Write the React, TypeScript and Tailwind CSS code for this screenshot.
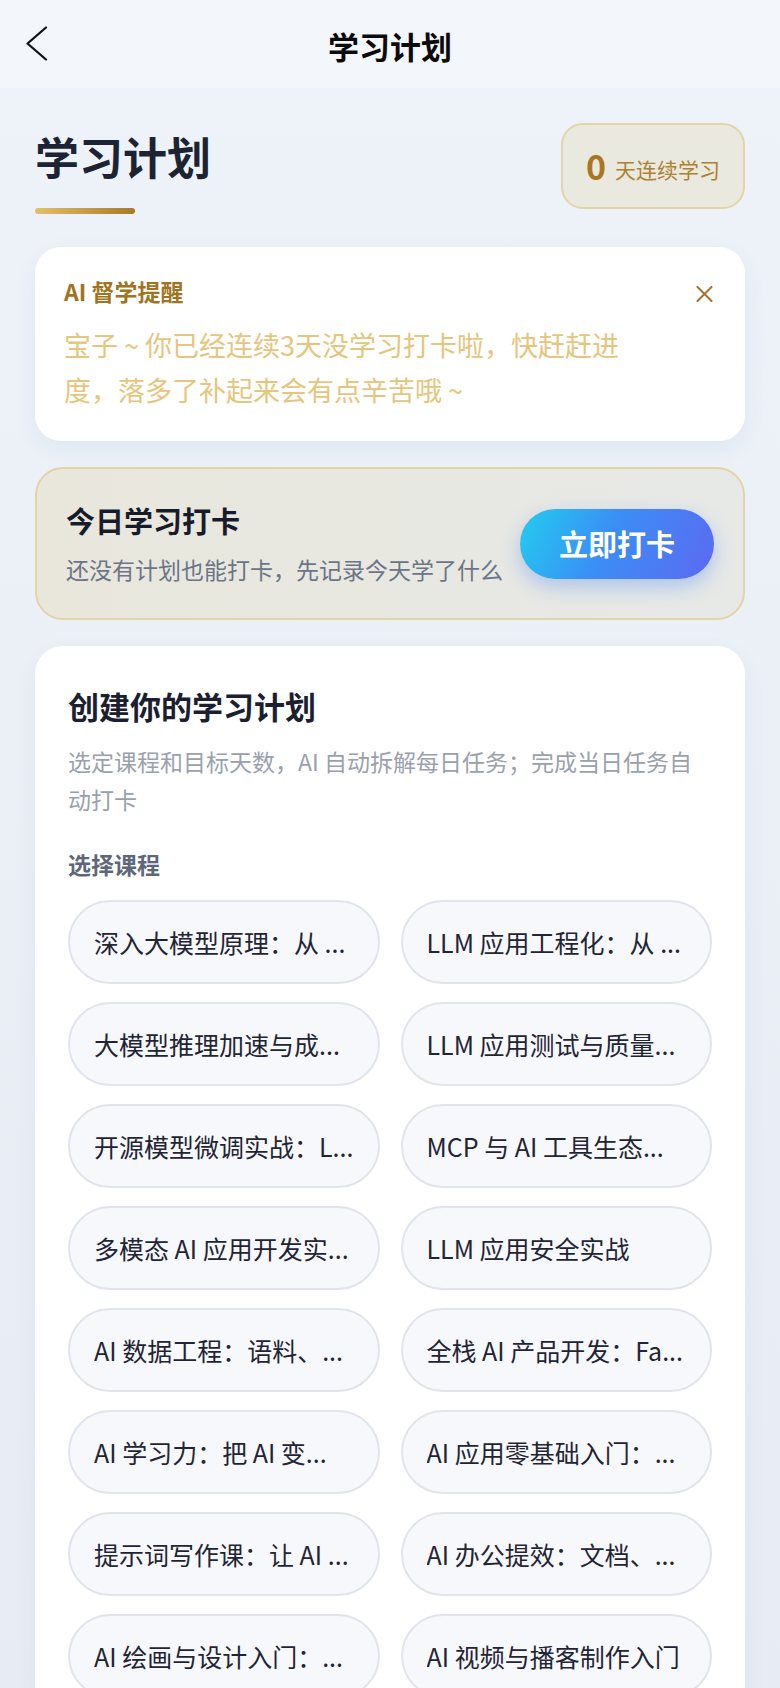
import React from "react";

const courses = [
  "深入大模型原理：从 ...",
  "LLM 应用工程化：从 ...",
  "大模型推理加速与成...",
  "LLM 应用测试与质量...",
  "开源模型微调实战：L...",
  "MCP 与 AI 工具生态...",
  "多模态 AI 应用开发实...",
  "LLM 应用安全实战",
  "AI 数据工程：语料、...",
  "全栈 AI 产品开发：Fa...",
  "AI 学习力：把 AI 变...",
  "AI 应用零基础入门：...",
  "提示词写作课：让 AI ...",
  "AI 办公提效：文档、...",
  "AI 绘画与设计入门：...",
  "AI 视频与播客制作入门",
];

export default function App() {
  return (
    <div className="min-h-[1688px] w-full bg-gradient-to-b from-[#eef3fa] to-[#e6ebf3] font-['Noto_Sans_CJK_SC','Noto_Sans',sans-serif]">
      {/* Nav bar */}
      <div className="grid h-[88px] grid-cols-[1fr_auto_1fr] items-center bg-[#f3f6fb] px-[25px]">
        <button className="flex h-[40px] w-[40px] items-center justify-start">
          <svg width="24" height="36" viewBox="0 0 24 36" fill="none">
            <polyline
              points="21,1.5 2.5,17.5 21,33.5"
              stroke="#111111"
              strokeWidth="2.3"
              strokeLinecap="round"
              strokeLinejoin="round"
            />
          </svg>
        </button>
        <div className="pt-[3px] text-[31px] font-bold leading-[40px] text-[#0b0b0b]">学习计划</div>
        <div />
      </div>

      <div className="px-[35px]">
        {/* Heading row */}
        <div className="flex items-start justify-between pt-[35px]">
          <div className="pt-[5px]">
            <h1 className="text-[44px] font-bold leading-[57px] text-[#1c2434]">学习计划</h1>
            <div className="mt-[23px] h-[6px] w-[100px] rounded-full bg-gradient-to-r from-[#e2c16a] to-[#a8792a]" />
          </div>
          <div className="flex h-[86px] w-[184px] items-center justify-center gap-[9px] rounded-[22px] border-2 border-[#e3d5a6] bg-[#e9e9df]">
            <span className="text-[34px] font-bold leading-none text-[#a8771f]">0</span>
            <span className="pt-[6px] text-[21px] leading-none text-[#ad8130]">天连续学习</span>
          </div>
        </div>

        {/* AI reminder */}
        <div className="mt-[33px] rounded-[26px] bg-white px-[29px] pb-[29px] pt-[28px] shadow-[0_8px_24px_rgba(40,60,100,0.06)]">
          <div className="flex items-center justify-between">
            <div className="text-[23px] font-bold leading-[32px] text-[#a2731f]">AI 督学提醒</div>
            <button className="mt-[6px] flex h-[24px] w-[24px] items-center justify-center">
              <svg width="17" height="16" viewBox="0 0 17 16" fill="none">
                <path d="M1.5 1 L15.5 15 M15.5 1 L1.5 15" stroke="#a2732c" strokeWidth="2" strokeLinecap="round" />
              </svg>
            </button>
          </div>
          <p className="mt-[15px] text-[27px] leading-[45px] text-[#e6c57d]">
            宝子 ~ 你已经连续3天没学习打卡啦，快赶赶进
            <br />
            度，落多了补起来会有点辛苦哦 ~
          </p>
        </div>

        {/* Check-in */}
        <div className="mt-[26px] flex h-[153px] items-center justify-between rounded-[28px] border-2 border-[#e2d4a6] bg-gradient-to-r from-[#e9e7dc] to-[#e7e9e7] pl-[29px] pr-[29px]">
          <div className="flex flex-col">
            <div className="text-[29px] font-bold leading-[36px] text-[#161c2a]">今日学习打卡</div>
            <div className="mt-[15px] text-[23px] leading-[32px] text-[#6b7587]">还没有计划也能打卡，先记录今天学了什么</div>
          </div>
          <button className="flex h-[70px] w-[194px] items-center justify-center rounded-full bg-[linear-gradient(115deg,#22cdef_0%,#3b8ef5_45%,#5d69f2_100%)] text-[29px] font-bold text-white shadow-[0_8px_20px_rgba(59,130,246,0.35)]">
            立即打卡
          </button>
        </div>

        {/* Create plan */}
        <div className="mt-[26px] rounded-[28px] bg-white px-[33px] pb-[40px] pt-[38px] shadow-[0_8px_24px_rgba(40,60,100,0.05)]">
          <h2 className="text-[31px] font-bold leading-[44px] text-[#1a2030]">创建你的学习计划</h2>
          <p className="mt-[14px] text-[23px] leading-[38px] text-[#9aa1ae]">
            选定课程和目标天数，AI 自动拆解每日任务；完成当日任务自动打卡
          </p>
          <div className="mt-[30px] text-[23px] font-bold leading-[32px] text-[#5d677a]">选择课程</div>
          <div className="mt-[20px] grid grid-cols-2 gap-x-[21px] gap-y-[18px]">
            {courses.map((c) => (
              <button
                key={c}
                className="flex h-[84px] min-w-0 items-center rounded-full border-2 border-[#e1e4ea] bg-[#f7f8fc] pl-[24px] pr-[12px] text-left"
              >
                <span className="block min-w-0 overflow-hidden whitespace-nowrap text-[25px] leading-[34px] text-[#1f2535]">
                  {c}
                </span>
              </button>
            ))}
          </div>
          <div className="mt-[36px] text-[23px] font-bold leading-[32px] text-[#5d677a]">目标天数</div>
          <div className="mt-[20px] flex gap-[18px]">
            {["7 天", "14 天", "21 天", "30 天"].map((d) => (
              <div key={d} className="flex h-[70px] flex-1 items-center justify-center rounded-full border-2 border-[#e1e4ea] bg-[#f7f8fc] text-[25px] text-[#1f2535]">
                {d}
              </div>
            ))}
          </div>
        </div>
        <div className="h-[40px]" />
      </div>
    </div>
  );
}
